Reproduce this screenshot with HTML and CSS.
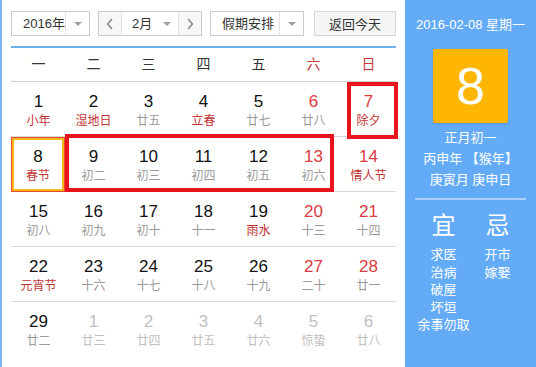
FILE: index.html
```html
<!DOCTYPE html>
<html lang="zh-CN">
<head>
    <meta charset="UTF-8" />
    <link rel="stylesheet" href="styles.css">
</head>
<body>

<div class="cal">
    <div class="main">
        <div class="toolbar">
            <div class="sel sel-year">
                <span class="sel-text">2016年</span>
                <span class="sel-arrow"><i class="caret"></i></span>
            </div>
            <div class="sel sel-month">
                <span class="nav nav-prev">
                    <svg width="8" height="12" viewBox="0 0 8 12"><polyline points="6,1 1.5,6 6,11" fill="none" stroke="#777" stroke-width="1.2"/></svg>
                </span>
                <span class="sel-text">2月</span>
                <span class="sel-arrow no-line"><i class="caret"></i></span>
                <span class="nav nav-next">
                    <svg width="8" height="12" viewBox="0 0 8 12"><polyline points="2,1 6.5,6 2,11" fill="none" stroke="#777" stroke-width="1.2"/></svg>
                </span>
            </div>
            <div class="sel sel-holiday">
                <span class="sel-text">假期安排</span>
                <span class="sel-arrow"><i class="caret"></i></span>
            </div>
            <button class="today-btn">返回今天</button>
        </div>

        <div class="weekdays">
            <span>一</span><span>二</span><span>三</span><span>四</span><span>五</span>
            <span class="wk">六</span><span class="wk">日</span>
        </div>

        <div class="days">
            <div class="day"><b>1</b><em class="fest">小年</em></div>
            <div class="day"><b>2</b><em class="fest">湿地日</em></div>
            <div class="day"><b>3</b><em>廿五</em></div>
            <div class="day"><b>4</b><em class="fest">立春</em></div>
            <div class="day"><b>5</b><em>廿七</em></div>
            <div class="day wkend"><b>6</b><em>廿八</em></div>
            <div class="day wkend"><b>7</b><em class="fest">除夕</em></div>

            <div class="day today"><b>8</b><em class="fest">春节</em></div>
            <div class="day"><b>9</b><em>初二</em></div>
            <div class="day"><b>10</b><em>初三</em></div>
            <div class="day"><b>11</b><em>初四</em></div>
            <div class="day"><b>12</b><em>初五</em></div>
            <div class="day wkend"><b>13</b><em>初六</em></div>
            <div class="day wkend"><b>14</b><em class="fest">情人节</em></div>

            <div class="day"><b>15</b><em>初八</em></div>
            <div class="day"><b>16</b><em>初九</em></div>
            <div class="day"><b>17</b><em>初十</em></div>
            <div class="day"><b>18</b><em>十一</em></div>
            <div class="day"><b>19</b><em class="fest">雨水</em></div>
            <div class="day wkend"><b>20</b><em>十三</em></div>
            <div class="day wkend"><b>21</b><em>十四</em></div>

            <div class="day"><b>22</b><em class="fest">元宵节</em></div>
            <div class="day"><b>23</b><em>十六</em></div>
            <div class="day"><b>24</b><em>十七</em></div>
            <div class="day"><b>25</b><em>十八</em></div>
            <div class="day"><b>26</b><em>十九</em></div>
            <div class="day wkend"><b>27</b><em>二十</em></div>
            <div class="day wkend"><b>28</b><em>廿一</em></div>

            <div class="day last"><b>29</b><em>廿二</em></div>
            <div class="day last other"><b>1</b><em>廿三</em></div>
            <div class="day last other"><b>2</b><em>廿四</em></div>
            <div class="day last other"><b>3</b><em>廿五</em></div>
            <div class="day last other"><b>4</b><em>廿六</em></div>
            <div class="day last other"><b>5</b><em>惊蛰</em></div>
            <div class="day last other"><b>6</b><em>廿八</em></div>
        </div>

        <div class="mark mark-week"></div>
        <div class="mark mark-eve"></div>
    </div>

    <aside class="side">
        <div class="side-date">2016-02-08 星期一</div>
        <div class="big-day">8</div>
        <div class="lunar">
            <p>正月初一</p>
            <p>丙申年 【猴年】</p>
            <p>庚寅月 庚申日</p>
        </div>
        <div class="side-line"></div>
        <div class="yiji">
            <div class="yiji-col">
                <h2>宜</h2>
                <p>求医</p>
                <p>治病</p>
                <p>破屋</p>
                <p>坏垣</p>
                <p>余事勿取</p>
            </div>
            <div class="yiji-col">
                <h2>忌</h2>
                <p>开市</p>
                <p>嫁娶</p>
            </div>
        </div>
    </aside>
</div>

</body>
</html>
```

FILE: styles.css
```css
body {
    margin: 0;
    padding: 0;
    font-family: "Liberation Sans", "Noto Sans CJK SC", sans-serif;
    background-color: #fff;
}

.cal {
    display: flex;
    width: 536px;
    height: 367px;
    overflow: hidden;
}

.main {
    position: relative;
    width: 394px;
    padding: 11px 0 0 9px;
    border-left: 2px solid #7db6ec;
    background-color: #fff;
}

/* toolbar */
.toolbar {
    display: flex;
    height: 25px;
    width: 385px;
}

.sel {
    display: flex;
    box-sizing: border-box;
    height: 25px;
    border: 1px solid #cbcbcb;
    background-color: #fff;
    color: #333;
    font-size: 13px;
    line-height: 23px;
}

.sel-text {
    flex: 1;
    padding-left: 11px;
}

.sel-arrow {
    display: flex;
    align-items: center;
    justify-content: center;
    width: 23px;
    border-left: 1px solid #e2e2e2;
}

.sel-arrow.no-line {
    border-left: none;
}

.caret {
    width: 0;
    height: 0;
    border-left: 4px solid transparent;
    border-right: 4px solid transparent;
    border-top: 4px solid #a0a0a0;
}

.sel-year {
    width: 79px;
}

.sel-month {
    width: 104px;
    margin-left: 8px;
}

.sel-month .sel-text {
    padding-left: 10px;
}

.nav {
    display: flex;
    align-items: center;
    justify-content: center;
    width: 22px;
    background-color: #f7f7f7;
}

.nav-prev {
    border-right: 1px solid #e2e2e2;
}

.nav-next {
    border-left: 1px solid #e2e2e2;
}

.sel-holiday {
    width: 94px;
    margin-left: 8px;
}

.today-btn {
    box-sizing: border-box;
    width: 82px;
    height: 25px;
    margin-left: 10px;
    padding: 0;
    border: 1px solid #d6d6d6;
    background-color: #f5f5f5;
    color: #333;
    font-family: "Liberation Sans", "Noto Sans CJK SC", sans-serif;
    font-size: 13px;
}

/* weekday header */
.weekdays {
    display: grid;
    grid-template-columns: repeat(7, 55px);
    width: 385px;
    height: 33px;
    margin-top: 10px;
    border-top: 2px solid #6eb0ea;
    border-bottom: 1px solid #cfcfcf;
    color: #333;
    font-size: 14px;
    line-height: 33px;
    text-align: center;
}

.weekdays .wk {
    color: #c83a3a;
}

/* days */
.days {
    display: grid;
    grid-template-columns: repeat(7, 55px);
    width: 385px;
}

.day {
    box-sizing: border-box;
    height: 55px;
    padding-top: 10px;
    border-bottom: 1px solid #d9d9d9;
    text-align: center;
}

.day.last {
    border-bottom: none;
}

.day b {
    display: block;
    font-weight: normal;
    font-size: 17px;
    line-height: 20px;
    color: #111;
}

.day em {
    display: block;
    font-style: normal;
    font-size: 12px;
    line-height: 18px;
    color: #9a9a9a;
}

.day em.fest {
    color: #c23232;
}

.day.wkend b {
    color: #db3a40;
}

.day.other b,
.day.other em {
    color: #c0c0c0;
}

.day.today {
    width: 54px;
    box-shadow: inset 0 0 0 1px #e94a2c, inset 0 0 0 3px #fbb617;
    border-bottom: none;
}

/* red marks over the grid */
.mark {
    position: absolute;
    box-sizing: border-box;
    border: 4px solid #e8141e;
}

.mark-week {
    left: 63px;
    top: 134px;
    width: 269px;
    height: 58px;
}

.mark-eve {
    left: 345px;
    top: 82px;
    width: 51px;
    height: 57px;
}

/* side panel */
.side {
    width: 131px;
    background-color: #64abf7;
    color: #fff;
    text-align: center;
}

.side-date {
    margin-top: 15px;
    font-size: 13px;
    line-height: 20px;
}

.big-day {
    width: 75px;
    height: 74px;
    margin: 14px auto 0;
    border-radius: 2px;
    background-color: #ffb600;
    box-shadow: 0 1px 2px rgba(0,0,0,0.15);
    font-size: 52px;
    line-height: 74px;
}

.lunar {
    margin-top: 4px;
}

.lunar p {
    margin: 0;
    font-size: 13px;
    line-height: 21px;
}

.side-line {
    width: 111px;
    height: 2px;
    margin: 8px auto 0;
    background-color: #a9cff8;
}

.yiji {
    display: flex;
    justify-content: center;
    margin-top: 11px;
}

.yiji-col {
    width: 54px;
}

.yiji-col h2 {
    margin: 0 0 5px;
    font-size: 24px;
    line-height: 30px;
    font-weight: normal;
}

.yiji-col p {
    margin: 0;
    font-size: 13px;
    line-height: 17.5px;
    white-space: nowrap;
}
```
